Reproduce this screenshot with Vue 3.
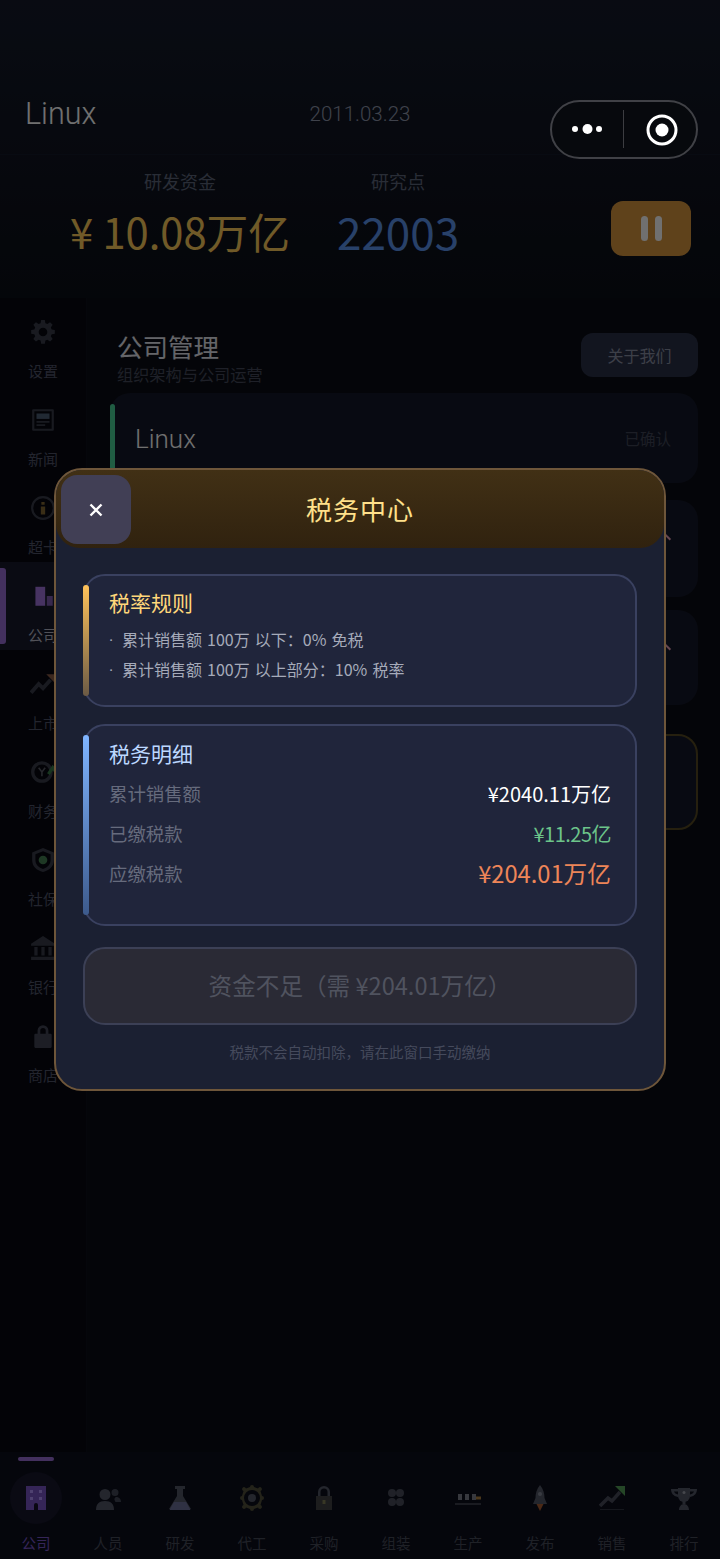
<script setup>
const sideItems = [
  { label: '设置', icon: 'gear' },
  { label: '新闻', icon: 'news' },
  { label: '超卡', icon: 'info' },
  { label: '公司', icon: 'bars', active: true },
  { label: '上市', icon: 'trend' },
  { label: '财务', icon: 'coin' },
  { label: '社保', icon: 'shield' },
  { label: '银行', icon: 'bank' },
  { label: '商店', icon: 'lock' }
]

const tabs = [
  { label: '公司', icon: 'building', active: true },
  { label: '人员', icon: 'people' },
  { label: '研发', icon: 'flask' },
  { label: '代工', icon: 'cog' },
  { label: '采购', icon: 'bag' },
  { label: '组装', icon: 'clover' },
  { label: '生产', icon: 'line' },
  { label: '发布', icon: 'rocket' },
  { label: '销售', icon: 'sales' },
  { label: '排行', icon: 'trophy' }
]

const gearPath = 'M10.3 1h3.4l.5 2.9 1.9.8 2.4-1.7 2.4 2.4-1.7 2.4.8 1.9 2.9.5v3.4l-2.9.5-.8 1.9 1.7 2.4-2.4 2.4-2.4-1.7-1.9.8-.5 2.9h-3.4l-.5-2.9-1.9-.8-2.4 1.7-2.4-2.4 1.7-2.4-.8-1.9-2.9-.5v-3.4l2.9-.5.8-1.9-1.7-2.4 2.4-2.4 2.4 1.7 1.9-.8zM12 8a4 4 0 1 0 0 8 4 4 0 0 0 0-8z'

const icons = {
  gear: [{ d: gearPath, fill: '#5b6170' }],
  news: [
    { d: 'M3 2h18a1 1 0 0 1 1 1v18a1 1 0 0 1-1 1H3a1 1 0 0 1-1-1V3a1 1 0 0 1 1-1zm1 2v16h16V4z', fill: '#5b6170' },
    { d: 'M6 6h12v5H6z', fill: '#7d97b5' },
    { d: 'M6 13h12v1.500H6zM6 16h8v1.500H6z', fill: '#5b6170' }
  ],
  info: [
    { d: 'M12 1a11 11 0 1 0 0 22 11 11 0 0 0 0-22zm0 2a9 9 0 1 1 0 18 9 9 0 0 1 0-18z', fill: '#5b6170' },
    { d: 'M10.500 6.500h3v2.500h-3zM10 10.500h4V18h-4z', fill: '#d8aa4c' }
  ],
  bars: [
    { d: 'M5 3.500h9V21H5z', fill: '#a274e0' },
    { d: 'M15.500 12h5.500v9h-5.500z', fill: '#7d5bb0' }
  ],
  trend: [
    { d: 'M1 20l7-8 4 4 7-8', stroke: '#5b6170', width: 3.500 },
    { d: 'M15 3h8v8z', fill: '#e0926a' }
  ],
  coin: [
    { d: 'M11 2a10 10 0 1 0 0 20 10 10 0 0 0 0-20zm0 3a7 7 0 1 1 0 14 7 7 0 0 1 0-14z', fill: '#5b6170' },
    { d: 'M8 8l3 4 3-4M11 12v4', stroke: '#8c8f98', width: 1.500 },
    { d: 'M17 14l4-6 3 4', stroke: '#58c56c', width: 3 }
  ],
  shield: [
    { d: 'M12 1l10 4v7c0 6-4 9.500-10 11C6 21.500 2 18 2 12V5zm0 3L5 6.800V12c0 4 2.500 6.800 7 8.200 4.500-1.400 7-4.200 7-8.200V6.800z', fill: '#5b6170' },
    { d: 'M12 8a4 4 0 1 0 0 8 4 4 0 0 0 0-8z', fill: '#6fcf7f' }
  ],
  bank: [
    { d: 'M12 1l11 7v2H1V8zM1 20h22v3H1zM4 11h3v8H4zM10.500 11h3v8h-3zM17 11h3v8h-3z', fill: '#5b6170' }
  ],
  lock: [
    { d: 'M7 10V7a5 5 0 0 1 10 0v3h2a1 1 0 0 1 1 1v11a1 1 0 0 1-1 1H5a1 1 0 0 1-1-1V11a1 1 0 0 1 1-1zm2.500 0h5V7a2.500 2.500 0 0 0-5 0z', fill: '#6a7083' }
  ],
  building: [
    { d: 'M3 1h20v24H3z', fill: '#7a55c7' },
    { d: 'M7 5h3v3H7zM16 5h3v3h-3zM7 12h3v3H7zM16 12h3v3h-3z', fill: '#b594ff' },
    { d: 'M11 25v-5a2 2 0 0 1 4 0v5z', fill: '#15102a' }
  ],
  people: [
    { d: 'M10 4a5.500 5.500 0 1 0 0 11 5.500 5.500 0 0 0 0-11zM1 25c0-6 3-9 9-9s9 3 9 9z', fill: '#6b7080' },
    { d: 'M20 4a3.500 3.500 0 1 0 0 7 3.500 3.500 0 0 0 0-7zM21 12c2.800 0 5 1.500 5 5h-5.500c-1-2-2-3.500 .5-5z', fill: '#565b6b' }
  ],
  flask: [
    { d: 'M8 1h10v3h-2v7l8 13H2l8-13V4H8z', fill: '#6b7080' },
    { d: 'M7 17h12l4.500 8h-21z', fill: '#8c93c4' }
  ],
  cog: [
    { d: 'M13 0a2 2 0 0 1 2 2l4 1.500a2 2 0 1 1 2.500 2.500l1.500 5a2 2 0 1 1 0 4l-1.500 5a2 2 0 1 1-2.500 2.500l-4 1.500a2 2 0 1 1-4 0l-4-1.500a2 2 0 1 1-2.500-2.500l-1.500-5a2 2 0 1 1 0-4l1.500-5A2 2 0 1 1 7 3.500L11 2a2 2 0 0 1 2-2zm0 5a8 8 0 1 0 0 16 8 8 0 0 0 0-16z', fill: '#6b6746' },
    { d: 'M13 9a4 4 0 1 0 0 8 4 4 0 0 0 0-8z', fill: '#6b7080' }
  ],
  bag: [
    { d: 'M7 11V7a6 6 0 0 1 12 0v4h-2.500V7a3.500 3.500 0 0 0-7 0v4z', fill: '#6b7080' },
    { d: 'M5 11h16v14H5z', fill: '#555' },
    { d: 'M11.500 15h3v4h-3z', fill: '#a9a368' }
  ],
  clover: [
    { d: 'M9 4a4 4 0 1 0 0 8 4 4 0 0 0 0-8zM17 4a4 4 0 1 0 0 8 4 4 0 0 0 0-8zM9 13a4 4 0 1 0 0 8 4 4 0 0 0 0-8zM17 13a4 4 0 1 0 0 8 4 4 0 0 0 0-8z', fill: '#5e6372' }
  ],
  line: [
    { d: 'M3 9h4v6H3zM10 9h4v6h-4zM17 9h4v6h-4z', fill: '#a4a8b5' },
    { d: 'M21 11.500h5v3h-5z', fill: '#e3a64d' },
    { d: 'M0 18h26v2H0z', fill: '#4c505e' }
  ],
  rocket: [
    { d: 'M13 0c3.500 4 4.500 9 4.500 13l2.500 6H6l2.500-6c0-4 1-9 4.500-13z', fill: '#6b7080' },
    { d: 'M13 7a2 2 0 1 0 0 4 2 2 0 0 0 0-4z', fill: '#aab0c0' },
    { d: 'M9.500 19h7L13 26z', fill: '#e07b3c' }
  ],
  sales: [
    { d: 'M1 21l8-8 4 3 8-9', stroke: '#5e6372', width: 3.500 },
    { d: 'M16 1h10v10z', fill: '#6fd06f' },
    { d: 'M1 24h24v1H1z', fill: '#3e424f' }
  ],
  trophy: [
    { d: 'M7 3h12v8a6 6 0 0 1-12 0z', fill: '#6b7080' },
    { d: 'M7 4H0c0 4 2 7 7 8V9.500C5 9 3.500 8 3 6.500h4zM19 4h7c0 4-2 7-7 8V9.500c2-.5 3.500-1.500 4-3h-4z', fill: '#6b7080' },
    { d: 'M11.500 15h3v4h-3zM8 25c0-3 2-6 5-6s5 3 5 6z', fill: '#6b7080' },
    { d: 'M13 6a1.500 1.500 0 1 0 0 3 1.500 1.500 0 0 0 0-3z', fill: '#cfd3df' }
  ]
}
</script>

<template>
  <div class="page">
    <header class="top">
      <div class="title-row">
        <span class="co-name">Linux</span>
        <span class="date">2011.03.23</span>
      </div>
      <div class="stats">
        <div class="stat">
          <span class="stat-label">研发资金</span>
          <span class="stat-value gold">¥ 10.08万亿</span>
        </div>
        <div class="stat">
          <span class="stat-label">研究点</span>
          <span class="stat-value blue">22003</span>
        </div>
        <div class="pause"><i></i><i></i></div>
      </div>
    </header>

    <main class="main">
      <aside class="side">
        <div v-for="item in sideItems" :key="item.label" class="side-item" :class="{ active: item.active }">
          <svg class="side-icon" viewBox="0 0 24 24">
            <path v-for="(p, i) in icons[item.icon]" :key="i" :d="p.d"
              :fill="p.fill || 'none'" :stroke="p.stroke || 'none'" :stroke-width="p.width || 0" />
          </svg>
          <span class="side-label">{{ item.label }}</span>
        </div>
      </aside>

      <section class="content">
        <div class="content-head">
          <div>
            <h2>公司管理</h2>
            <p>组织架构与公司运营</p>
          </div>
          <div class="about">关于我们</div>
        </div>
        <div class="card first">
          <span class="card-name">Linux</span>
          <span class="card-state">已确认</span>
        </div>
        <div class="card second"><span class="chev"></span></div>
        <div class="card third"><span class="chev"></span></div>
        <div class="card outlined"></div>
      </section>
    </main>

    <nav class="tabs">
      <div v-for="tab in tabs" :key="tab.label" class="tab" :class="{ active: tab.active }">
        <div class="tab-icon">
          <svg viewBox="0 0 26 26">
            <path v-for="(p, i) in icons[tab.icon]" :key="i" :d="p.d"
              :fill="p.fill || 'none'" :stroke="p.stroke || 'none'" :stroke-width="p.width || 0" />
          </svg>
        </div>
        <span>{{ tab.label }}</span>
      </div>
    </nav>

    <div class="mask">
      <div class="modal">
        <div class="modal-head">
          <button class="close">
            <svg viewBox="0 0 16 16"><path d="M2.500 2.500l11 11M13.500 2.500l-11 11" stroke="#fff" stroke-width="2.400" /></svg>
          </button>
          <span class="modal-title">税务中心</span>
        </div>
        <div class="modal-body">
          <div class="panel">
            <span class="panel-bar bar-gold"></span>
            <h3 class="rule-title">税率规则</h3>
            <p class="rule"><span class="dot">·</span>累计销售额 100万 以下：0% 免税</p>
            <p class="rule"><span class="dot">·</span>累计销售额 100万 以上部分：10% 税率</p>
          </div>
          <div class="panel detail">
            <span class="panel-bar bar-blue"></span>
            <h3 class="detail-title">税务明细</h3>
            <div class="row"><span>累计销售额</span><b class="white">¥2040.11万亿</b></div>
            <div class="row"><span>已缴税款</span><b class="green">¥11.25亿</b></div>
            <div class="row"><span>应缴税款</span><b class="orange">¥204.01万亿</b></div>
          </div>
          <button class="pay">资金不足（需 ¥204.01万亿）</button>
          <p class="note">税款不会自动扣除，请在此窗口手动缴纳</p>
        </div>
      </div>
    </div>

    <div class="capsule">
      <svg class="dots" viewBox="0 0 32 12">
        <circle cx="4" cy="6" r="3" fill="#fff" />
        <circle cx="16.500" cy="6" r="5" fill="#fff" />
        <circle cx="28" cy="6" r="3" fill="#fff" />
      </svg>
      <span class="capsule-line"></span>
      <svg class="target" viewBox="0 0 32 32">
        <circle cx="16" cy="16" r="14" fill="none" stroke="#fff" stroke-width="3" />
        <circle cx="16" cy="16" r="6.500" fill="#fff" />
      </svg>
    </div>
  </div>
</template>

<style>
html, body { margin: 0; background: #000; }
</style>

<style scoped>
.page {
  position: relative;
  width: 720px;
  height: 1559px;
  overflow: hidden;
  display: flex;
  flex-direction: column;
  background: #0f1320;
  color: #fff;
  font-family: "Noto Sans CJK SC", "Noto Sans", sans-serif;
}
h2, h3, p { margin: 0; font-weight: 400; }

.top {
  height: 298px;
  padding-top: 85px;
  box-sizing: border-box;
  flex: none;
  background: linear-gradient(#151b2b, #0b0e17);
}
.title-row {
  position: relative;
  height: 70px;
  box-sizing: border-box;
  display: flex;
  align-items: center;
  justify-content: center;
  padding: 0 26px 12px;
  border-bottom: 1px solid #141a2a;
}
.co-name { position: absolute; left: 25px; font: 300 30.500px Roboto, sans-serif; color: #fff; }
.date { font: 300 20.500px Roboto, sans-serif; color: #8f97ab; }
.stats { display: flex; align-items: flex-start; padding: 11px 29px 0 70px; gap: 47px; }
.stat { display: flex; flex-direction: column; align-items: center; gap: 4px; }
.stat-label { font-size: 18px; line-height: 30px; color: #5e667c; }
.stat-value { line-height: 62px; font-weight: 400; }
.gold { color: #ffce5c; font-size: 41.700px; }
.blue { color: #5c95ee; font-size: 44px; }
.pause {
  margin: 35px 0 0 auto;
  width: 80px;
  height: 55px;
  border-radius: 12px;
  background: #d9973f;
  display: flex;
  align-items: center;
  justify-content: center;
  gap: 7px;
}
.pause i { width: 7px; height: 25px; border-radius: 4px; background: #fff; }

.main { flex: 1; display: flex; min-height: 0; background: #0b0d15; }
.side {
  width: 87px;
  flex: none;
  background: #070812;
  box-sizing: border-box;
  border-right: 1px solid #0d0f1a;
}
.side-item {
  position: relative;
  height: 88px;
  display: flex;
  flex-direction: column;
  align-items: center;
  padding-top: 21px;
  box-sizing: border-box;
}
.side-item.active { background: #181b2c; }
.side-item.active::before {
  content: "";
  position: absolute;
  left: 0;
  top: 6px;
  bottom: 6px;
  width: 6px;
  border-radius: 0 3px 3px 0;
  background: #9a6fd6;
}
.side-icon { width: 26px; height: 26px; opacity: 0.6; }
.side-item.active .side-icon { opacity: 1; }
.side-label { margin-top: 15px; font-size: 15px; line-height: 22px; color: #50556a; }
.side-item.active .side-label { color: #b8b8c8; }

.content { flex: 1; padding: 29px 22px 0 23px; min-width: 0; }
.content-head { display: flex; justify-content: space-between; align-items: flex-start; padding-left: 7px; height: 66px; }
.content-head h2 { font-size: 25.500px; line-height: 37px; color: #e4e6ee; }
.content-head p { font-size: 16.200px; line-height: 20px; color: #444a5c; }
.about {
  margin-top: 6px;
  width: 117px;
  height: 44px;
  border-radius: 12px;
  background: #2a3148;
  font-size: 16px;
  line-height: 44px;
  text-align: center;
  color: #8a90a4;
}
.card {
  position: relative;
  height: 90px;
  border-radius: 20px;
  background: #141829;
  display: flex;
  align-items: center;
  justify-content: space-between;
  padding: 0 27px 0 25px;
}
.first { margin-bottom: 17px; }
.second { height: 97px; margin-bottom: 13px; }
.third { height: 95px; margin-bottom: 29px; }
.card.first::before {
  content: "";
  position: absolute;
  left: 0;
  top: 11px;
  bottom: 11px;
  width: 5px;
  border-radius: 3px;
  background: #49d39a;
}
.card-name { font: 300 26px Roboto, sans-serif; color: #fff; padding-top: 2px; }
.card-state { font-size: 15.500px; color: #404658; }
.chev {
  position: absolute;
  right: 29px;
  top: 34px;
  width: 8px;
  height: 8px;
  border-left: 2px solid #e8a0b8;
  border-top: 2px solid #e8a0b8;
  transform: rotate(45deg);
}
.outlined { height: 96px; background: #141829; border: 2px solid #574a22; box-sizing: border-box; }

.tabs {
  height: 107px;
  flex: none;
  display: flex;
  background: #0c0e1c;
}
.tab {
  position: relative;
  width: 72px;
  display: flex;
  flex-direction: column;
  align-items: center;
  font-size: 14.500px;
  line-height: 22px;
  color: #474b5a;
}
.tab-icon {
  width: 52px;
  height: 52px;
  margin-top: 20px;
  margin-bottom: 8px;
  border-radius: 50%;
  display: flex;
  align-items: center;
  justify-content: center;
}
.tab-icon svg { width: 26px; height: 26px; opacity: 0.75; }
.tab.active { color: #7a55c7; }
.tab.active .tab-icon svg { opacity: 1; }
.tab.active .tab-icon { background: #17172c; }
.tab.active::before {
  content: "";
  position: absolute;
  left: 18px;
  top: 5px;
  width: 36px;
  height: 4px;
  border-radius: 2px;
  background: #9a6fd6;
}

.mask {
  position: absolute;
  inset: 0;
  background: rgba(0, 0, 0, 0.56);
  display: flex;
  align-items: center;
  justify-content: center;
}
.modal {
  width: 612px;
  height: 623px;
  box-sizing: border-box;
  border: 2px solid #6e563a;
  border-radius: 28px;
  background: #1b2032;
}
.modal-head {
  position: relative;
  height: 78px;
  border-radius: 26px 26px 24px 24px;
  background: linear-gradient(#413015, #30220f);
  display: flex;
  align-items: center;
  justify-content: center;
}
.close {
  position: absolute;
  left: 5px;
  top: 5px;
  width: 70px;
  height: 69px;
  border: none;
  border-radius: 16px;
  background: #413f55;
  display: flex;
  align-items: center;
  justify-content: center;
  padding: 0;
}
.close svg { width: 16px; height: 16px; }
.modal-title { font-size: 26px; color: #ffe08a; letter-spacing: 1px; padding-bottom: 2px; }
.modal-body { padding: 26px 27px 0; }
.panel {
  position: relative;
  height: 133px;
  box-sizing: border-box;
  border: 2px solid #3a4160;
  border-radius: 22px;
  background: #20253b;
  padding: 11px 24px 0;
  margin-bottom: 17px;
}
.panel-bar {
  position: absolute;
  left: -2px;
  top: 9px;
  bottom: 9px;
  width: 6px;
  border-radius: 3px;
}
.bar-gold { background: linear-gradient(#ffc25a, #6b5a45); }
.bar-blue { background: linear-gradient(#7fb4ff, #3d5a8c); }
.panel h3 { font-size: 21px; line-height: 30px; }
.rule-title { color: #ffd77a; margin-bottom: 8px; }
.detail-title { color: #bcd8ff; margin-bottom: 5px; }
.rule { font-size: 16px; line-height: 29px; color: #a6abba; word-spacing: 1.500px; }
.dot { display: inline-block; width: 13px; font-family: Roboto, sans-serif; }
.detail { height: 202px; margin-bottom: 21px; padding-top: 12px; }
.row { height: 40px; display: flex; align-items: center; justify-content: space-between; }
.row span { font-size: 18.400px; color: #666b7d; }
.row b { font-weight: 400; font-size: 20px; }
.white { color: #fff; }
.row .green { color: #6cc48a; letter-spacing: -0.500px; }
.row .orange { color: #ee8558; font-size: 23.700px; }
.pay {
  display: block;
  width: 100%;
  height: 78px;
  padding: 0 0 2px;
  border: 2px solid #3c4056;
  border-radius: 22px;
  background: #2a2a35;
  color: #50535f;
  font: 400 23.600px "Noto Sans CJK SC", sans-serif;
}
.note { margin-top: 17px; text-align: center; font-size: 14.500px; line-height: 20px; color: #454a5c; }

.capsule {
  position: absolute;
  left: 550px;
  top: 100px;
  width: 148px;
  height: 59px;
  box-sizing: border-box;
  border: 2px solid #404146;
  border-radius: 30px;
  background: #07090d;
}
.dots { position: absolute; left: 19px; top: 21px; width: 32px; height: 12px; }
.capsule-line { position: absolute; left: 71px; top: 8px; width: 1px; height: 38px; background: #3c3d41; }
.target { position: absolute; left: 93.500px; top: 11.500px; width: 32px; height: 32px; }
</style>
